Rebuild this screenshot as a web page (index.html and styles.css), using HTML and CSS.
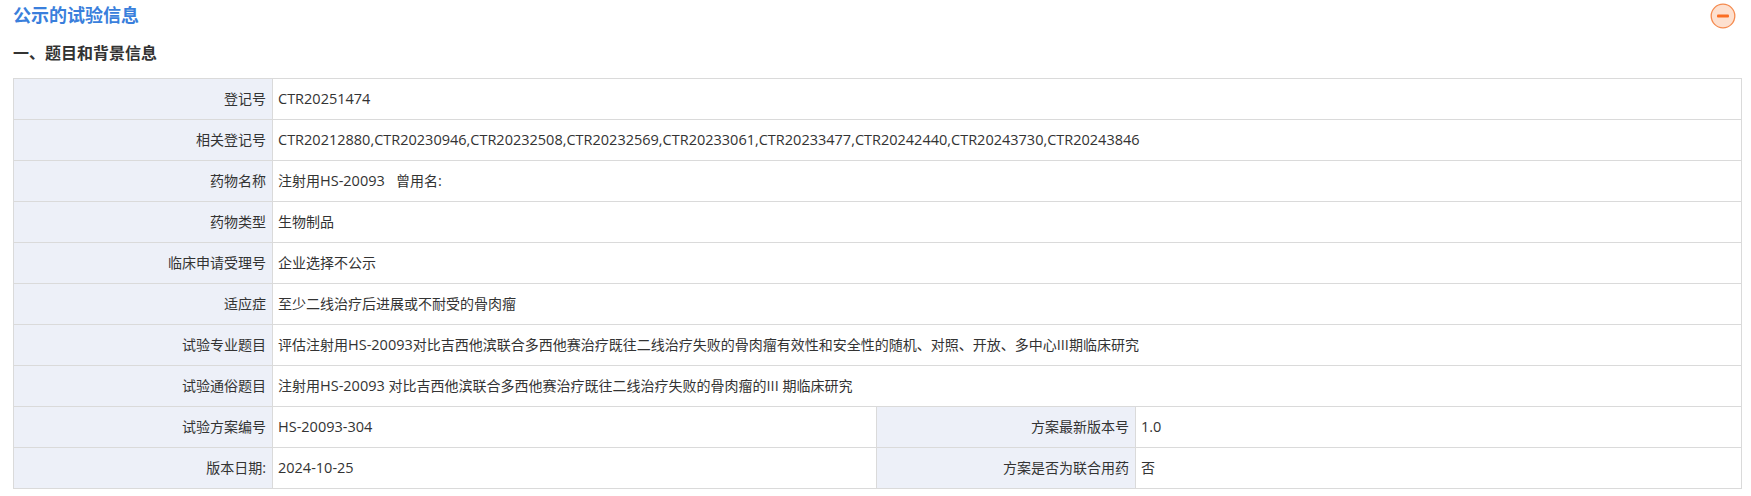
FILE: index.html
```html
<!DOCTYPE html>
<html lang="zh">
<head>
<meta charset="utf-8">
<title>公示的试验信息</title>
<link rel="stylesheet" href="styles.css">
</head>
<body>
<div class="header">
  <h2 class="title">公示的试验信息</h2>
  <svg class="toggle" width="26" height="26" viewBox="0 0 26 26"><circle cx="13" cy="13" r="11.8" fill="#fde0cf" stroke="#f58a4e" stroke-width="1.3"/><rect x="7" y="11.5" width="12" height="3" rx="1" fill="#fb6e23"/></svg>
</div>
<h3 class="section">一、题目和背景信息</h3>
<table class="info">
  <colgroup><col class="c1"><col class="c2"><col class="c3"><col class="c4"></colgroup>
  <tr><th>登记号</th><td colspan="3"><span class="latin">CTR20251474</span></td></tr>
  <tr><th>相关登记号</th><td colspan="3"><span class="latin">CTR20212880,CTR20230946,CTR20232508,CTR20232569,CTR20233061,CTR20233477,CTR20242440,CTR20243730,CTR20243846</span></td></tr>
  <tr><th>药物名称</th><td colspan="3">注射用<span class="latin">HS-20093 &nbsp;&nbsp;</span>曾用名<span class="latin">:</span></td></tr>
  <tr><th>药物类型</th><td colspan="3">生物制品</td></tr>
  <tr><th>临床申请受理号</th><td colspan="3">企业选择不公示</td></tr>
  <tr><th>适应症</th><td colspan="3">至少二线治疗后进展或不耐受的骨肉瘤</td></tr>
  <tr><th>试验专业题目</th><td colspan="3">评估注射用<span class="latin">HS-20093</span>对比吉西他滨联合多西他赛治疗既往二线治疗失败的骨肉瘤有效性和安全性的随机、对照、开放、多中心<span class="latin">III</span>期临床研究</td></tr>
  <tr><th>试验通俗题目</th><td colspan="3">注射用<span class="latin">HS-20093 </span>对比吉西他滨联合多西他赛治疗既往二线治疗失败的骨肉瘤的<span class="latin">III </span>期临床研究</td></tr>
  <tr><th>试验方案编号</th><td><span class="latin">HS-20093-304</span></td><th>方案最新版本号</th><td><span class="latin">1.0</span></td></tr>
  <tr><th>版本日期<span class="latin">:</span></th><td><span class="latin">2024-10-25</span></td><th>方案是否为联合用药</th><td>否</td></tr>
</table>
</body>
</html>
```

FILE: styles.css
```css
* { box-sizing: border-box; }
html, body { margin: 0; padding: 0; background: #fff; }
body {
  height: 496px;
  overflow: hidden;
  padding: 0 10px 0 13px;
  font-family: "Noto Sans CJK SC", "Open Sans", sans-serif;
  font-size: 14px;
  color: #333;
}
.header {
  display: flex;
  justify-content: space-between;
  align-items: center;
  height: 30px;
  padding-right: 5px;
}
.title {
  margin: -2px 0 0;
  font-size: 18px;
  font-weight: 700;
  line-height: 30px;
  color: #3a7fdc;
}
.toggle { flex: none; margin-top: 1px; }
.section {
  margin: 10px 0 0;
  height: 38px;
  font-size: 16px;
  font-weight: 700;
  line-height: 24px;
  color: #333;
}
.info {
  width: 1728px;
  table-layout: fixed;
  border-collapse: collapse;
}
.c1 { width: 259px; }
.c2 { width: 604px; }
.c3 { width: 259px; }
.c4 { width: 606px; }
.info th, .info td {
  height: 41px;
  padding: 0 6px 2px 5px;
  border: 1px solid #dadada;
  font-weight: 400;
  line-height: 20px;
  white-space: nowrap;
}
.info th { text-align: right; background: #edf0f8; }
.info td { text-align: left; background: #fff; }
.latin {
  font-family: "Open Sans", sans-serif;
  font-size: 14.5px;
}
```
